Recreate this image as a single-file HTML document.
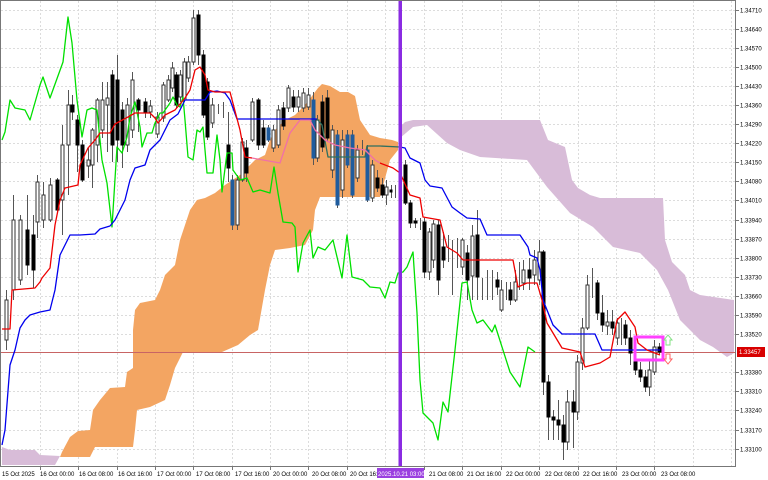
<!DOCTYPE html>
<html><head><meta charset="utf-8"><style>
html,body{margin:0;padding:0;background:#fff;width:768px;height:480px;overflow:hidden}
svg{display:block}
text{font-family:"Liberation Sans",sans-serif;font-size:6px;fill:#000}
</style></head><body>
<svg width="768" height="480" viewBox="0 0 768 480" xmlns="http://www.w3.org/2000/svg">
<rect width="768" height="480" fill="#fff"/>
<!-- grid -->
<g stroke="#dcdcdc" stroke-width="1" stroke-dasharray="2,2">
<line x1="1" x2="735" y1="10.5" y2="10.5"/><line x1="1" x2="735" y1="29.5" y2="29.5"/><line x1="1" x2="735" y1="48.5" y2="48.5"/><line x1="1" x2="735" y1="67.5" y2="67.5"/><line x1="1" x2="735" y1="86.5" y2="86.5"/><line x1="1" x2="735" y1="105.5" y2="105.5"/><line x1="1" x2="735" y1="124.5" y2="124.5"/><line x1="1" x2="735" y1="143.5" y2="143.5"/><line x1="1" x2="735" y1="162.5" y2="162.5"/><line x1="1" x2="735" y1="181.5" y2="181.5"/><line x1="1" x2="735" y1="200.5" y2="200.5"/><line x1="1" x2="735" y1="220.5" y2="220.5"/><line x1="1" x2="735" y1="239.5" y2="239.5"/><line x1="1" x2="735" y1="258.5" y2="258.5"/><line x1="1" x2="735" y1="277.5" y2="277.5"/><line x1="1" x2="735" y1="296.5" y2="296.5"/><line x1="1" x2="735" y1="315.5" y2="315.5"/><line x1="1" x2="735" y1="334.5" y2="334.5"/><line x1="1" x2="735" y1="372.5" y2="372.5"/><line x1="1" x2="735" y1="391.5" y2="391.5"/><line x1="1" x2="735" y1="410.5" y2="410.5"/><line x1="1" x2="735" y1="430.5" y2="430.5"/><line x1="1" x2="735" y1="449.5" y2="449.5"/>
<line y1="1" y2="466" x1="40.5" x2="40.5"/><line y1="1" y2="466" x1="78.5" x2="78.5"/><line y1="1" y2="466" x1="117.5" x2="117.5"/><line y1="1" y2="466" x1="155.5" x2="155.5"/><line y1="1" y2="466" x1="193.5" x2="193.5"/><line y1="1" y2="466" x1="232.5" x2="232.5"/><line y1="1" y2="466" x1="270.5" x2="270.5"/><line y1="1" y2="466" x1="308.5" x2="308.5"/><line y1="1" y2="466" x1="347.5" x2="347.5"/><line y1="1" y2="466" x1="385.5" x2="385.5"/><line y1="1" y2="466" x1="424.5" x2="424.5"/><line y1="1" y2="466" x1="462.5" x2="462.5"/><line y1="1" y2="466" x1="501.5" x2="501.5"/><line y1="1" y2="466" x1="539.5" x2="539.5"/><line y1="1" y2="466" x1="578.5" x2="578.5"/><line y1="1" y2="466" x1="616.5" x2="616.5"/><line y1="1" y2="466" x1="654.5" x2="654.5"/><line y1="1" y2="466" x1="693.5" x2="693.5"/><line y1="1" y2="466" x1="731.5" x2="731.5"/>
</g>
<!-- clouds -->
<polygon fill="#f3a562" points="60,457 62,452 70,437 78,431 90,430 93,410 100,400 110,388 125,387 127,372 133,368 133,330 135,310 140,303 155,300 160,290 165,275 175,265 180,240 185,225 190,210 197,200 205,198 215,193 225,185 240,175 245,170 255,160 265,155 270,140 275,130 285,120 295,115 305,105 312,96 318,88 322,84 330,86 340,92 348,92 355,96 360,120 370,135 380,138 392,140 398,142 398,150 390,160 380,197 320,197 315,210 313,230 305,245 290,248 275,250 270,265 265,290 258,330 250,335 238,345 222,352 183,352 175,368 170,385 165,400 150,407 137,410 135,430 133,447 95,447 90,457"/>
<polygon fill="#d8bcd8" points="2,447 10,450 35,450 40,455 60,456 55,465 2,465"/>
<polygon fill="#d8bcd8" points="400,127 405,122 413,120 540,120 548,140 565,147 572,180 578,188 590,195 600,198 663,198 665,240 672,262 685,275 690,290 700,295 734,300 734,353 727,357 713,347 700,340 680,320 668,290 657,270 640,253 613,247 593,227 570,213 547,187 527,160 480,157 460,150 447,143 427,125 413,127 400,138"/>
<!-- price line -->
<line x1="1" x2="735" y1="352.5" y2="352.5" stroke="#c86464" stroke-width="1"/>
<!-- candles -->
<g stroke="#555" stroke-width="1">
<line x1="6.5" x2="6.5" y1="290" y2="350"/><line x1="13.5" x2="13.5" y1="195" y2="300"/><line x1="20.5" x2="20.5" y1="215" y2="285"/><line x1="27.5" x2="27.5" y1="195" y2="275"/><line x1="33.5" x2="33.5" y1="215" y2="288"/><line x1="37.5" x2="37.5" y1="175" y2="238"/><line x1="43.5" x2="43.5" y1="182" y2="228"/><line x1="50.5" x2="50.5" y1="178" y2="222"/><line x1="57.5" x2="57.5" y1="178" y2="212"/><line x1="62.5" x2="62.5" y1="125" y2="235"/><line x1="68.5" x2="68.5" y1="90" y2="195"/><line x1="72.5" x2="72.5" y1="95" y2="120"/><line x1="77.5" x2="77.5" y1="115" y2="172"/><line x1="82.5" x2="82.5" y1="140" y2="182"/><line x1="88.5" x2="88.5" y1="148" y2="178"/><line x1="92.5" x2="92.5" y1="128" y2="188"/><line x1="97.5" x2="97.5" y1="98" y2="162"/><line x1="102.5" x2="102.5" y1="82" y2="138"/><line x1="107.5" x2="107.5" y1="82" y2="152"/><line x1="112.5" x2="112.5" y1="70" y2="162"/><line x1="117.5" x2="117.5" y1="55" y2="162"/><line x1="122.5" x2="122.5" y1="102" y2="168"/><line x1="127.5" x2="127.5" y1="98" y2="152"/><line x1="132.5" x2="132.5" y1="72" y2="138"/><line x1="138.5" x2="138.5" y1="98" y2="132"/><line x1="145.5" x2="145.5" y1="98" y2="118"/><line x1="150.5" x2="150.5" y1="100" y2="118"/><line x1="157.5" x2="157.5" y1="112" y2="138"/><line x1="163.5" x2="163.5" y1="82" y2="122"/><line x1="168.5" x2="168.5" y1="75" y2="102"/><line x1="172.5" x2="172.5" y1="62" y2="92"/><line x1="176.5" x2="176.5" y1="72" y2="108"/><line x1="180.5" x2="180.5" y1="70" y2="102"/><line x1="184.5" x2="184.5" y1="58" y2="102"/><line x1="188.5" x2="188.5" y1="56" y2="82"/><line x1="193.5" x2="193.5" y1="10" y2="65"/><line x1="198.5" x2="198.5" y1="10" y2="65"/><line x1="203.5" x2="203.5" y1="50" y2="118"/><line x1="207.5" x2="207.5" y1="78" y2="140"/><line x1="212.5" x2="212.5" y1="98" y2="128"/><line x1="218.5" x2="218.5" y1="104" y2="114"/><line x1="223.5" x2="223.5" y1="102" y2="118"/><line x1="228.5" x2="228.5" y1="112" y2="182"/><line x1="232.5" x2="232.5" y1="175" y2="230"/><line x1="237.5" x2="237.5" y1="175" y2="230"/><line x1="242.5" x2="242.5" y1="138" y2="182"/><line x1="246.5" x2="246.5" y1="140" y2="182"/><line x1="252.5" x2="252.5" y1="98" y2="142"/><line x1="258.5" x2="258.5" y1="98" y2="150"/><line x1="263.5" x2="263.5" y1="120" y2="148"/><line x1="268.5" x2="268.5" y1="125" y2="142"/><line x1="273.5" x2="273.5" y1="125" y2="152"/><line x1="278.5" x2="278.5" y1="105" y2="148"/><line x1="283.5" x2="283.5" y1="102" y2="130"/><line x1="288.5" x2="288.5" y1="85" y2="112"/><line x1="293.5" x2="293.5" y1="90" y2="112"/><line x1="298.5" x2="298.5" y1="90" y2="112"/><line x1="303.5" x2="303.5" y1="88" y2="112"/><line x1="308.5" x2="308.5" y1="88" y2="110"/><line x1="313.5" x2="313.5" y1="92" y2="165"/><line x1="317.5" x2="317.5" y1="115" y2="162"/><line x1="322.5" x2="322.5" y1="95" y2="152"/><line x1="327.5" x2="327.5" y1="90" y2="142"/><line x1="332.5" x2="332.5" y1="125" y2="178"/><line x1="337.5" x2="337.5" y1="130" y2="208"/><line x1="342.5" x2="342.5" y1="130" y2="198"/><line x1="347.5" x2="347.5" y1="130" y2="168"/><line x1="352.5" x2="352.5" y1="130" y2="198"/><line x1="357.5" x2="357.5" y1="145" y2="182"/><line x1="362.5" x2="362.5" y1="140" y2="155"/><line x1="367.5" x2="367.5" y1="145" y2="202"/><line x1="372.5" x2="372.5" y1="160" y2="202"/><line x1="377.5" x2="377.5" y1="170" y2="192"/><line x1="382.5" x2="382.5" y1="178" y2="198"/><line x1="386.5" x2="386.5" y1="180" y2="205"/><line x1="391.5" x2="391.5" y1="185" y2="198"/><line x1="395.5" x2="395.5" y1="185" y2="198"/>
<line x1="405.5" x2="405.5" y1="160" y2="205"/><line x1="410.5" x2="410.5" y1="200" y2="228"/><line x1="415.5" x2="415.5" y1="218" y2="228"/><line x1="420.5" x2="420.5" y1="218" y2="230"/><line x1="424.5" x2="424.5" y1="218" y2="278"/><line x1="429.5" x2="429.5" y1="228" y2="280"/><line x1="433.5" x2="433.5" y1="220" y2="268"/><line x1="438.5" x2="438.5" y1="220" y2="295"/><line x1="443.5" x2="443.5" y1="232" y2="268"/><line x1="448.5" x2="448.5" y1="235" y2="262"/><line x1="452.5" x2="452.5" y1="240" y2="295"/><line x1="457.5" x2="457.5" y1="238" y2="268"/><line x1="462.5" x2="462.5" y1="238" y2="275"/><line x1="467.5" x2="467.5" y1="245" y2="300"/><line x1="472.5" x2="472.5" y1="225" y2="300"/><line x1="477.5" x2="477.5" y1="210" y2="300"/><line x1="482.5" x2="482.5" y1="278" y2="300"/><line x1="487.5" x2="487.5" y1="270" y2="300"/><line x1="492.5" x2="492.5" y1="270" y2="300"/><line x1="497.5" x2="497.5" y1="272" y2="295"/><line x1="501.5" x2="501.5" y1="280" y2="312"/><line x1="506.5" x2="506.5" y1="282" y2="300"/><line x1="510.5" x2="510.5" y1="282" y2="305"/><line x1="515.5" x2="515.5" y1="270" y2="302"/><line x1="519.5" x2="519.5" y1="262" y2="290"/><line x1="523.5" x2="523.5" y1="260" y2="290"/><line x1="529.5" x2="529.5" y1="258" y2="290"/><line x1="534.5" x2="534.5" y1="250" y2="285"/><line x1="539.5" x2="539.5" y1="240" y2="285"/><line x1="543.5" x2="543.5" y1="250" y2="395"/><line x1="548.5" x2="548.5" y1="375" y2="440"/><line x1="553.5" x2="553.5" y1="410" y2="440"/><line x1="558.5" x2="558.5" y1="400" y2="440"/><line x1="563.5" x2="563.5" y1="415" y2="460"/><line x1="567.5" x2="567.5" y1="390" y2="450"/><line x1="573.5" x2="573.5" y1="390" y2="448"/><line x1="577.5" x2="577.5" y1="355" y2="420"/><line x1="582.5" x2="582.5" y1="318" y2="370"/><line x1="587.5" x2="587.5" y1="275" y2="330"/><line x1="592.5" x2="592.5" y1="268" y2="298"/><line x1="597.5" x2="597.5" y1="280" y2="320"/><line x1="602.5" x2="602.5" y1="295" y2="332"/><line x1="607.5" x2="607.5" y1="310" y2="335"/><line x1="612.5" x2="612.5" y1="310" y2="335"/><line x1="617.5" x2="617.5" y1="318" y2="345"/><line x1="621.5" x2="621.5" y1="318" y2="345"/><line x1="625.5" x2="625.5" y1="320" y2="345"/><line x1="630.5" x2="630.5" y1="330" y2="365"/><line x1="635.5" x2="635.5" y1="352" y2="375"/><line x1="640.5" x2="640.5" y1="362" y2="382"/><line x1="645.5" x2="645.5" y1="370" y2="392"/><line x1="649.5" x2="649.5" y1="360" y2="396"/><line x1="654.5" x2="654.5" y1="340" y2="375"/><line x1="659.5" x2="659.5" y1="343" y2="355"/>
</g>
<g fill="#000" stroke="#000" stroke-width="1">
<rect x="26" y="230" width="3" height="35"/><rect x="32" y="235" width="3" height="35"/><rect x="56" y="180" width="3" height="30"/><rect x="71" y="105" width="3" height="7"/><rect x="76" y="120" width="3" height="25"/><rect x="81" y="145" width="3" height="35"/><rect x="111" y="75" width="3" height="70"/><rect x="116" y="80" width="3" height="60"/><rect x="121" y="110" width="3" height="35"/><rect x="137" y="100" width="3" height="10"/><rect x="144" y="102" width="3" height="10"/><rect x="175" y="75" width="3" height="30"/><rect x="197" y="15" width="3" height="40"/><rect x="202" y="55" width="3" height="60"/><rect x="206" y="82" width="3" height="55"/><rect x="227" y="145" width="3" height="23"/><rect x="245" y="148" width="3" height="25"/><rect x="257" y="100" width="3" height="45"/><rect x="262" y="128" width="3" height="17"/><rect x="282" y="108" width="3" height="18"/><rect x="292" y="97" width="3" height="10"/><rect x="321" y="102" width="3" height="45"/><rect x="326" y="98" width="3" height="40"/><rect x="376" y="178" width="3" height="10"/><rect x="381" y="185" width="3" height="10"/><rect x="390" y="190" width="2" height="2"/>
<rect x="404" y="165" width="3" height="38"/><rect x="409" y="203" width="3" height="20"/><rect x="414" y="221" width="3" height="2"/><rect x="423" y="222" width="3" height="50"/><rect x="437" y="225" width="3" height="55"/><rect x="442" y="247" width="3" height="13"/><rect x="466" y="253" width="3" height="27"/><rect x="476" y="235" width="3" height="42"/><rect x="496" y="280" width="3" height="7"/><rect x="509" y="290" width="3" height="10"/><rect x="528" y="270" width="3" height="8"/><rect x="542" y="252" width="3" height="130"/><rect x="547" y="382" width="3" height="35"/><rect x="552" y="417" width="3" height="3"/><rect x="557" y="420" width="3" height="5"/><rect x="562" y="425" width="3" height="17"/><rect x="572" y="402" width="3" height="10"/><rect x="596" y="283" width="3" height="30"/><rect x="601" y="313" width="3" height="12"/><rect x="611" y="322" width="3" height="6"/><rect x="624" y="325" width="3" height="13"/><rect x="629" y="338" width="3" height="15"/><rect x="634" y="362" width="3" height="8"/><rect x="639" y="370" width="3" height="7"/><rect x="644" y="377" width="3" height="10"/><rect x="658" y="347" width="3" height="5"/>
</g>
<g fill="#1f5c9e" stroke="#1f5c9e" stroke-width="1">
<rect x="231" y="180" width="3" height="45"/><rect x="267" y="128" width="3" height="12"/><rect x="312" y="100" width="3" height="58"/><rect x="336" y="135" width="3" height="70"/><rect x="346" y="135" width="3" height="30"/><rect x="351" y="135" width="3" height="60"/><rect x="366" y="150" width="3" height="50"/>
</g>
<g fill="#fff" stroke="#333" stroke-width="1">
<rect x="5" y="300" width="3" height="40"/><rect x="12" y="220" width="3" height="70"/><rect x="19" y="220" width="3" height="60"/><rect x="36" y="182" width="3" height="40"/><rect x="42" y="195" width="3" height="25"/><rect x="49" y="185" width="3" height="35"/><rect x="61" y="145" width="3" height="55"/><rect x="67" y="105" width="3" height="40"/><rect x="87" y="160" width="3" height="6"/><rect x="91" y="130" width="3" height="35"/><rect x="96" y="100" width="3" height="45"/><rect x="101" y="100" width="3" height="30"/><rect x="106" y="98" width="3" height="7"/><rect x="126" y="105" width="3" height="40"/><rect x="131" y="80" width="3" height="50"/><rect x="149" y="106" width="3" height="6"/><rect x="156" y="117" width="3" height="17"/><rect x="162" y="85" width="3" height="33"/><rect x="167" y="80" width="3" height="20"/><rect x="171" y="68" width="3" height="20"/><rect x="179" y="75" width="3" height="22"/><rect x="183" y="62" width="3" height="38"/><rect x="187" y="62" width="3" height="16"/><rect x="192" y="18" width="3" height="44"/><rect x="211" y="105" width="3" height="18"/><rect x="236" y="180" width="3" height="45"/><rect x="241" y="142" width="3" height="38"/><rect x="251" y="102" width="3" height="38"/><rect x="272" y="130" width="3" height="18"/><rect x="277" y="110" width="3" height="35"/><rect x="287" y="88" width="3" height="20"/><rect x="297" y="97" width="3" height="10"/><rect x="302" y="93" width="3" height="15"/><rect x="307" y="95" width="3" height="12"/><rect x="316" y="120" width="3" height="38"/><rect x="331" y="130" width="3" height="40"/><rect x="341" y="140" width="3" height="50"/><rect x="356" y="150" width="3" height="28"/><rect x="371" y="165" width="3" height="33"/><rect x="385" y="187" width="3" height="8"/>
<rect x="428" y="232" width="3" height="40"/><rect x="432" y="224" width="3" height="36"/><rect x="461" y="240" width="3" height="27"/><rect x="471" y="236" width="3" height="40"/><rect x="500" y="290" width="3" height="20"/><rect x="514" y="282" width="3" height="18"/><rect x="522" y="270" width="3" height="13"/><rect x="533" y="260" width="3" height="15"/><rect x="538" y="252" width="3" height="28"/><rect x="566" y="402" width="3" height="40"/><rect x="576" y="362" width="3" height="50"/><rect x="581" y="328" width="3" height="35"/><rect x="586" y="285" width="3" height="43"/><rect x="606" y="322" width="3" height="4"/><rect x="616" y="323" width="3" height="15"/><rect x="648" y="370" width="3" height="17"/><rect x="653" y="347" width="3" height="25"/>
</g>
<!-- lines -->
<g fill="none" stroke-width="1.3" stroke-linejoin="round">
<polyline stroke="#00e000" points="2,140 5,132 10,100 15,108 25,110 30,120 40,85 43,77 50,98 63,62 68,17 72,43 77,100 82,137 87,110 92,108 97,110 102,160 107,183 112,227 117,147 122,153 127,137 130,117 135,102 140,127 142,147 147,133 152,133 155,123 160,113 163,113 170,103 173,97 177,105 180,107 183,97 185,120 188,157 193,160 197,130 200,132 203,127 207,173 213,173 217,135 220,160 222,192 227,153 232,153 233,170 240,180 247,178 253,192 260,190 270,193 274,167 278,193 283,222 292,223 295,227 298,272 303,243 310,230 313,258 318,247 325,250 333,240 342,278 347,235 352,277 363,280 370,287 380,288 385,298 390,282 395,283 398,273 403,272 407,267 413,252 417,313 420,380 423,413 433,423 438,440 443,402 448,412 455,350 462,283 467,282 472,310 477,323 483,320 492,332 495,325 510,372 520,387 528,347 535,352"/>
<polyline stroke="#0000ee" points="2,445 5,430 10,365 15,350 20,328 25,320 30,315 40,312 50,310 55,290 60,255 65,245 70,235 80,235 95,234 100,229 110,226 115,220 120,210 125,200 130,180 135,168 145,165 150,150 160,140 170,120 178,114 185,100 195,100 205,100 210,92 217,91 225,93 230,100 237,119 317,119"/>
<polyline stroke="#0000ee" points="400,147 405,148 410,158 420,163 425,180 430,186 442,188 452,207 460,213 467,218 480,219 487,235 520,235 528,247 530,255 537,258 540,270 543,300 553,325 562,334 595,334 602,350 660,350"/>
<polyline stroke="#2f6f5f" points="317,119 322,125 328,157 365,157 367,146 380,146 400,147"/>
<polyline stroke="#ee0000" points="2,329 10,329 12,290 35,288 40,282 42,278 50,268 55,225 60,200 65,188 78,185 80,165 88,148 95,140 100,133 110,133 115,124 128,117 135,113 150,113 155,118 158,123 165,115 175,110 185,98 190,90 195,70 200,67 205,75 208,90 215,92 230,92 240,130 245,157 252,158"/>
<polyline stroke="#f070a8" points="252,158 280,163 290,133 300,120 310,120 315,130 325,140 335,145 350,148 365,150 375,160 380,163"/>
<polyline stroke="#ee0000" points="380,163 393,168 400,173 410,195 420,198 423,217 440,220 447,247 457,253 463,260 513,260 518,287 527,283 537,283 542,300 547,323 562,348 580,352 585,367 600,363 610,357 617,320 625,312 635,327 638,343 647,350 660,355"/>
</g>
<!-- vertical purple line -->
<rect x="398.5" y="1" width="3.5" height="465" fill="#8a2be2"/>
<!-- magenta box & arrows -->
<rect x="635" y="337" width="28" height="23" fill="none" stroke="#ff40ff" stroke-width="3"/>
<path d="M666,345 L666,340 L664,340 L668,335 L672,340 L670,340 L670,345 Z" fill="none" stroke="#80e080" stroke-width="1"/>
<path d="M666,354 L666,359 L664,359 L668,364 L672,359 L670,359 L670,354 Z" fill="none" stroke="#ff6060" stroke-width="1"/>
<!-- frame -->
<rect x="0.5" y="0.5" width="735" height="466" fill="none" stroke="#777" stroke-width="1"/>
<!-- axis ticks & price labels -->
<g stroke="#777"><line x1="735" x2="739" y1="10.5" y2="10.5"/><line x1="735" x2="739" y1="29.5" y2="29.5"/><line x1="735" x2="739" y1="48.5" y2="48.5"/><line x1="735" x2="739" y1="67.5" y2="67.5"/><line x1="735" x2="739" y1="86.5" y2="86.5"/><line x1="735" x2="739" y1="105.5" y2="105.5"/><line x1="735" x2="739" y1="124.5" y2="124.5"/><line x1="735" x2="739" y1="143.5" y2="143.5"/><line x1="735" x2="739" y1="162.5" y2="162.5"/><line x1="735" x2="739" y1="181.5" y2="181.5"/><line x1="735" x2="739" y1="200.5" y2="200.5"/><line x1="735" x2="739" y1="220.5" y2="220.5"/><line x1="735" x2="739" y1="239.5" y2="239.5"/><line x1="735" x2="739" y1="258.5" y2="258.5"/><line x1="735" x2="739" y1="277.5" y2="277.5"/><line x1="735" x2="739" y1="296.5" y2="296.5"/><line x1="735" x2="739" y1="315.5" y2="315.5"/><line x1="735" x2="739" y1="334.5" y2="334.5"/><line x1="735" x2="739" y1="372.5" y2="372.5"/><line x1="735" x2="739" y1="391.5" y2="391.5"/><line x1="735" x2="739" y1="410.5" y2="410.5"/><line x1="735" x2="739" y1="430.5" y2="430.5"/><line x1="735" x2="739" y1="449.5" y2="449.5"/></g>
<g>
<text x="740" y="12.5">1.34710</text><text x="740" y="31.5">1.34640</text><text x="740" y="50.5">1.34570</text><text x="740" y="69.5">1.34500</text><text x="740" y="88.5">1.34430</text><text x="740" y="107.5">1.34360</text><text x="740" y="126.5">1.34290</text><text x="740" y="145.5">1.34220</text><text x="740" y="164.5">1.34150</text><text x="740" y="183.5">1.34080</text><text x="740" y="202.5">1.34010</text><text x="740" y="222.5">1.33940</text><text x="740" y="241.5">1.33870</text><text x="740" y="260.5">1.33800</text><text x="740" y="279.5">1.33730</text><text x="740" y="298.5">1.33660</text><text x="740" y="317.5">1.33590</text><text x="740" y="336.5">1.33520</text><text x="740" y="374.5">1.33380</text><text x="740" y="393.5">1.33310</text><text x="740" y="412.5">1.33240</text><text x="740" y="432.5">1.33170</text><text x="740" y="451.5">1.33100</text>
</g>
<rect x="737" y="347" width="28" height="10" fill="#d80000"/>
<text x="739" y="354.2" style="fill:#fff">1.33457</text>
<!-- time labels -->
<g stroke="#777"><line x1="40.5" x2="40.5" y1="466" y2="470"/><line x1="78.5" x2="78.5" y1="466" y2="470"/><line x1="117.5" x2="117.5" y1="466" y2="470"/><line x1="155.5" x2="155.5" y1="466" y2="470"/><line x1="193.5" x2="193.5" y1="466" y2="470"/><line x1="232.5" x2="232.5" y1="466" y2="470"/><line x1="270.5" x2="270.5" y1="466" y2="470"/><line x1="308.5" x2="308.5" y1="466" y2="470"/><line x1="347.5" x2="347.5" y1="466" y2="470"/><line x1="424.5" x2="424.5" y1="466" y2="470"/><line x1="462.5" x2="462.5" y1="466" y2="470"/><line x1="501.5" x2="501.5" y1="466" y2="470"/><line x1="539.5" x2="539.5" y1="466" y2="470"/><line x1="578.5" x2="578.5" y1="466" y2="470"/><line x1="616.5" x2="616.5" y1="466" y2="470"/><line x1="654.5" x2="654.5" y1="466" y2="470"/></g>
<g>
<text x="2" y="476">15 Oct 2025</text><text x="40" y="476">16 Oct 00:00</text><text x="79" y="476">16 Oct 08:00</text><text x="118" y="476">16 Oct 16:00</text><text x="157" y="476">17 Oct 00:00</text><text x="196" y="476">17 Oct 08:00</text><text x="235" y="476">17 Oct 16:00</text><text x="273" y="476">20 Oct 00:00</text><text x="312" y="476">20 Oct 08:00</text><text x="350" y="476">20 Oct 16:00</text><text x="429" y="476">21 Oct 08:00</text><text x="467" y="476">21 Oct 16:00</text><text x="506" y="476">22 Oct 00:00</text><text x="545" y="476">22 Oct 08:00</text><text x="583" y="476">22 Oct 16:00</text><text x="622" y="476">23 Oct 00:00</text><text x="661" y="476">23 Oct 08:00</text>
</g>
<rect x="377" y="468" width="47" height="10" fill="#9b40e0"/>
<text x="378" y="476" style="fill:#fff">2025.10.21 03:00</text>
</svg>
</body></html>
